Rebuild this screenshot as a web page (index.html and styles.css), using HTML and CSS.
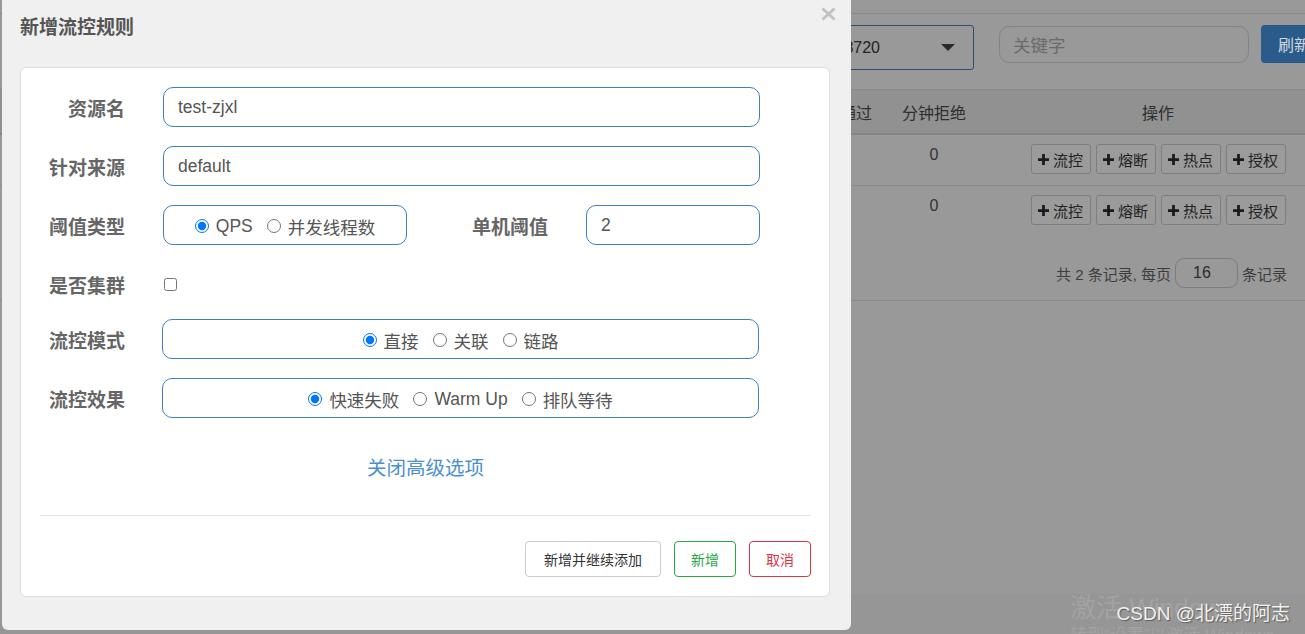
FILE: index.html
```html
<!DOCTYPE html>
<html lang="zh-CN">
<head>
<meta charset="utf-8">
<title>新增流控规则</title>
<link rel="stylesheet" href="styles.css">
</head>
<body>
<div class="page">
  <div class="topbar"></div>
  <div class="toolbar">
    <div class="select"><span class="select-text">192.168.0.105:8720</span><span class="caret"></span></div>
    <div class="search">关键字</div>
    <div class="refresh">刷新</div>
  </div>
  <div class="table">
    <div class="thead">
      <div class="c1">通过</div>
      <div class="c2">分钟拒绝</div>
      <div class="c3">操作</div>
    </div>
    <div class="trow first">
      <div class="c1"></div>
      <div class="c2">0</div>
      <div class="c3 ops">
        <span class="op"><svg class="plus" viewBox="0 0 12 12"><path d="M4.5 0h3v4.5H12v3H7.5V12h-3V7.5H0v-3h4.5z"/></svg>流控</span>
        <span class="op"><svg class="plus" viewBox="0 0 12 12"><path d="M4.5 0h3v4.5H12v3H7.5V12h-3V7.5H0v-3h4.5z"/></svg>熔断</span>
        <span class="op"><svg class="plus" viewBox="0 0 12 12"><path d="M4.5 0h3v4.5H12v3H7.5V12h-3V7.5H0v-3h4.5z"/></svg>热点</span>
        <span class="op"><svg class="plus" viewBox="0 0 12 12"><path d="M4.5 0h3v4.5H12v3H7.5V12h-3V7.5H0v-3h4.5z"/></svg>授权</span>
      </div>
    </div>
    <div class="trow">
      <div class="c1"></div>
      <div class="c2">0</div>
      <div class="c3 ops">
        <span class="op"><svg class="plus" viewBox="0 0 12 12"><path d="M4.5 0h3v4.5H12v3H7.5V12h-3V7.5H0v-3h4.5z"/></svg>流控</span>
        <span class="op"><svg class="plus" viewBox="0 0 12 12"><path d="M4.5 0h3v4.5H12v3H7.5V12h-3V7.5H0v-3h4.5z"/></svg>熔断</span>
        <span class="op"><svg class="plus" viewBox="0 0 12 12"><path d="M4.5 0h3v4.5H12v3H7.5V12h-3V7.5H0v-3h4.5z"/></svg>热点</span>
        <span class="op"><svg class="plus" viewBox="0 0 12 12"><path d="M4.5 0h3v4.5H12v3H7.5V12h-3V7.5H0v-3h4.5z"/></svg>授权</span>
      </div>
    </div>
  </div>
  <div class="pager"><span>共 2 条记录, 每页</span><span class="pagesize">16</span><span>条记录</span></div>
  <div class="spacer"></div>
  <div class="footer"></div>
  <div class="watermark">
    <div class="wm-big">激活 Windows</div>
    <div class="wm-small">转到“设置”以激活 Windows。</div>
  </div>
  <div class="csdn">CSDN @北漂的阿志</div>
</div>

<div class="modal">
  <div class="modal-header">
    <div class="modal-title">新增流控规则</div>
    <svg class="close" viewBox="0 0 15 14"><path d="M1.5 1.5L13.5 12.5M13.5 1.5L1.5 12.5" stroke="#c2c2c2" stroke-width="3" fill="none"/></svg>
  </div>
  <div class="card">
    <div class="form">
      <div class="row">
        <div class="label">资源名</div>
        <div class="input">test-zjxl</div>
      </div>
      <div class="row">
        <div class="label">针对来源</div>
        <div class="input">default</div>
      </div>
      <div class="row">
        <div class="label">阈值类型</div>
        <div class="input radio-box short">
          <label class="opt"><input type="radio" name="grade" checked>QPS</label>
          <label class="opt"><input type="radio" name="grade">并发线程数</label>
        </div>
        <div class="label wide">单机阈值</div>
        <div class="input small">2</div>
      </div>
      <div class="row row-check">
        <div class="label">是否集群</div>
        <input class="check" type="checkbox">
      </div>
      <div class="row">
        <div class="label">流控模式</div>
        <div class="input radio-box shift">
          <label class="opt"><input type="radio" name="mode" checked>直接</label>
          <label class="opt"><input type="radio" name="mode">关联</label>
          <label class="opt"><input type="radio" name="mode">链路</label>
        </div>
      </div>
      <div class="row">
        <div class="label">流控效果</div>
        <div class="input radio-box shift">
          <label class="opt"><input type="radio" name="effect" checked>快速失败</label>
          <label class="opt"><input type="radio" name="effect">Warm Up</label>
          <label class="opt"><input type="radio" name="effect">排队等待</label>
        </div>
      </div>
    </div>
    <div class="advanced"><a class="adv-link">关闭高级选项</a></div>
    <div class="divider"></div>
    <div class="actions">
      <span class="btn btn-wide">新增并继续添加</span>
      <span class="btn btn-success">新增</span>
      <span class="btn btn-danger">取消</span>
    </div>
  </div>
</div>
</body>
</html>
```

FILE: styles.css
```css
html, body {
  margin: 0;
  padding: 0;
  overflow: hidden;
  font-family: "Liberation Sans", "Noto Sans CJK SC", sans-serif;
}

.page {
  position: relative;
  width: 1305px;
  height: 634px;
  background: #999999;
  overflow: hidden;
  display: flex;
  flex-direction: column;
  color: #2b2b2b;
}

.topbar {
  height: 13px;
  border-bottom: 1px solid #8a8a8a;
  flex: none;
}

.toolbar {
  flex: none;
  border-bottom: 1px solid #8a8a8a;
  display: flex;
  align-items: flex-start;
  padding: 11px 0 0 774px;
  box-sizing: content-box;
  height: 64px;
}

.select {
  width: 200px;
  height: 45px;
  box-sizing: border-box;
  border: 1px solid #2a4d74;
  border-radius: 3px;
  display: flex;
  align-items: center;
  justify-content: flex-end;
  padding-right: 18px;
  font-size: 16px;
  color: #222;
  flex: none;
  overflow: hidden;
  white-space: nowrap;
}

.select-text {
  margin-right: 61px;
}

.caret {
  width: 0;
  height: 0;
  border-left: 7px solid transparent;
  border-right: 7px solid transparent;
  border-top: 7px solid #2a2a2a;
}

.search {
  margin: 1px 0 0 25px;
  width: 250px;
  height: 37px;
  box-sizing: border-box;
  border: 1px solid #848484;
  border-radius: 10px;
  padding-left: 13px;
  display: flex;
  align-items: center;
  font-size: 17.5px;
  color: #6a6a6a;
  flex: none;
}

.refresh {
  margin-left: 12px;
  width: 80px;
  height: 38px;
  box-sizing: border-box;
  background: #2a5b8a;
  border-radius: 4px;
  color: #d0d8e0;
  font-size: 16px;
  display: flex;
  align-items: center;
  padding-left: 17px;
  flex: none;
}

.table {
  flex: none;
  font-size: 16px;
}

.thead {
  height: 43px;
  background: #919191;
  border-bottom: 2px solid #858585;
  display: flex;
  align-items: center;
  padding-left: 840px;
  color: #2e2e2e;
}

.c1 { width: 61px; flex: none; }
.c2 { width: 66px; flex: none; text-align: center; }
.c3 { width: 382px; flex: none; text-align: center; }

.trow {
  height: 50px;
  box-sizing: content-box;
  padding-left: 840px;
  display: flex;
  align-items: flex-start;
}

.trow.first {
  border-bottom: 1px solid #8a8a8a;
}

.trow .c2 {
  margin-top: 9px;
  line-height: 22px;
  color: #333;
}

.ops {
  display: flex;
  justify-content: center;
  gap: 5px;
  margin-top: 9px;
}

.op {
  width: 60px;
  height: 30px;
  box-sizing: border-box;
  border: 1px solid #7e7e7e;
  border-radius: 3px;
  background: #9b9b9b;
  display: flex;
  align-items: center;
  justify-content: center;
  gap: 4px;
  font-size: 15px;
  color: #222;
}

.plus {
  width: 11px;
  height: 11px;
  fill: #1a1a1a;
  flex: none;
}

.pager {
  flex: none;
  display: flex;
  justify-content: flex-end;
  align-items: center;
  gap: 4px;
  padding: 22px 18px 12px 0;
  border-bottom: 1px solid #8a8a8a;
  font-size: 15px;
  color: #3d3d3d;
}

.pagesize {
  width: 63px;
  height: 30px;
  box-sizing: border-box;
  border: 1px solid #7d7d7d;
  border-radius: 9px;
  display: flex;
  align-items: center;
  padding-left: 17px;
  font-size: 16px;
  color: #2b2b2b;
}

.spacer {
  flex: 1;
}

.footer {
  height: 40px;
  flex: none;
  background: #969696;
}

.watermark {
  position: absolute;
  left: 1070px;
  top: 590px;
  color: rgba(255, 255, 255, 0.13);
  white-space: nowrap;
}

.wm-big {
  font-size: 26px;
  line-height: 36px;
}

.wm-small {
  font-size: 17px;
  line-height: 20px;
}

.csdn {
  position: absolute;
  right: 15px;
  top: 601px;
  font-size: 19px;
  line-height: 26px;
  color: #f2f2f2;
  text-shadow: 1px 1px 1px #5a5a5a;
  white-space: nowrap;
}

/* Modal */
.modal {
  position: absolute;
  left: 2px;
  top: 0;
  width: 849px;
  height: 630px;
  box-sizing: border-box;
  background: #f0f0f0;
  border-radius: 0 0 6px 6px;
  padding: 0 21px 33px 18px;
}

.modal-header {
  height: 67px;
  display: flex;
  justify-content: space-between;
  align-items: flex-start;
}

.modal-title {
  margin: 14px 0 0 0;
  font-size: 19px;
  line-height: 28px;
  font-weight: bold;
  color: #555;
}

.close {
  width: 15px;
  height: 14px;
  margin: 7px -6px 0 0;
}

.card {
  background: #fff;
  border: 1px solid #dcdcdc;
  border-radius: 6px;
  padding: 19px 18px 19px 19px;
}

.form {
  display: flex;
  flex-direction: column;
  gap: 19px;
}

.row {
  display: flex;
  align-items: center;
  height: 40px;
}

.row-check {
  margin-bottom: -4px;
}

.label {
  width: 85px;
  flex: none;
  margin-right: 38px;
  text-align: right;
  font-size: 19px;
  font-weight: bold;
  color: #666;
  white-space: nowrap;
}

.label.wide {
  width: 141px;
}

.input {
  width: 597px;
  height: 40px;
  box-sizing: border-box;
  flex: none;
  border: 1px solid #3f7fc0;
  border-radius: 10px;
  padding: 0 14px;
  display: flex;
  align-items: center;
  font-size: 17.5px;
  color: #555;
}

.input.small {
  width: 174px;
}

.radio-box {
  justify-content: center;
  gap: 14px;
  font-size: 17.5px;
  padding-top: 3px;
}

.radio-box.short {
  width: 244px;
}

.radio-box.shift {
  margin-left: -1px;
}

.opt {
  display: inline-flex;
  align-items: center;
  gap: 7px;
  white-space: nowrap;
}

.opt input {
  margin: -2px 0 0 0;
  width: 14px;
  height: 14px;
}

.check {
  margin: 0 0 0 1px;
  width: 13px;
  height: 13px;
}

.advanced {
  height: 28px;
  padding: 36px 0 33px;
  font-size: 19.5px;
  line-height: 28px;
  text-align: center;
}

.adv-link {
  color: #4a90d0;
}

.divider {
  border-top: 1px solid #e5e5e5;
}

.actions {
  margin-top: 25px;
  display: flex;
  justify-content: flex-end;
  gap: 13px;
}

.btn {
  height: 36px;
  box-sizing: border-box;
  padding: 0 16px;
  border: 1px solid #cccccc;
  border-radius: 4px;
  background: #fff;
  font-size: 14px;
  color: #333;
  display: flex;
  align-items: center;
}

.btn-wide {
  padding: 0 18px;
}

.btn-success {
  border-color: #28a745;
  color: #28a745;
}

.btn-danger {
  border-color: #dc3545;
  color: #dc3545;
}
```
